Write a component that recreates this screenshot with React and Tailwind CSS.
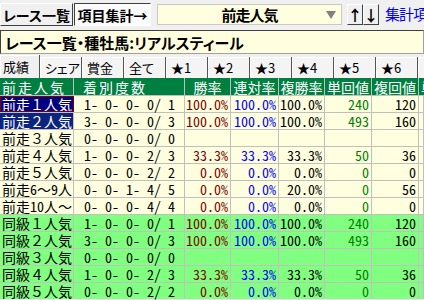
import React from 'react';

const cols = [74, 111, 46, 48, 46, 47, 47];

const rows = [
  { label: ['前走', '１', '人気'], count: '1- 0- 0- 0/ 1', win: '100.0%', ren: '100.0%', fuku: '100.0%', tan: '240', fk: '120', sel: 'focus', bg: 'yellow' },
  { label: ['前走', '２', '人気'], count: '3- 0- 0- 0/ 3', win: '100.0%', ren: '100.0%', fuku: '100.0%', tan: '493', fk: '160', sel: 'on', bg: 'yellow' },
  { label: ['前走', '３', '人気'], count: '0- 0- 0- 0/ 0', bg: 'yellow' },
  { label: ['前走', '４', '人気'], count: '1- 0- 0- 2/ 3', win: '33.3%', ren: '33.3%', fuku: '33.3%', tan: '50', fk: '36', bg: 'yellow' },
  { label: ['前走', '５', '人気'], count: '0- 0- 0- 2/ 2', win: '0.0%', ren: '0.0%', fuku: '0.0%', tan: '0', fk: '0', bg: 'yellow' },
  { label: ['前走', '6', '～', '9', '人'], count: '0- 0- 1- 4/ 5', win: '0.0%', ren: '0.0%', fuku: '20.0%', tan: '0', fk: '56', bg: 'yellow' },
  { label: ['前走', '10', '人～'], count: '0- 0- 0- 4/ 4', win: '0.0%', ren: '0.0%', fuku: '0.0%', tan: '0', fk: '0', bg: 'yellow' },
  { label: ['同級', '１', '人気'], count: '1- 0- 0- 0/ 1', win: '100.0%', ren: '100.0%', fuku: '100.0%', tan: '240', fk: '120', bg: 'green' },
  { label: ['同級', '２', '人気'], count: '3- 0- 0- 0/ 3', win: '100.0%', ren: '100.0%', fuku: '100.0%', tan: '493', fk: '160', bg: 'green' },
  { label: ['同級', '３', '人気'], count: '0- 0- 0- 0/ 0', bg: 'green' },
  { label: ['同級', '４', '人気'], count: '1- 0- 0- 2/ 3', win: '33.3%', ren: '33.3%', fuku: '33.3%', tan: '50', fk: '36', bg: 'green' },
  { label: ['同級', '５', '人気'], count: '0- 0- 0- 2/ 2', win: '0.0%', ren: '0.0%', fuku: '0.0%', tan: '0', fk: '0', bg: 'green' },
];

const tabs = ['シェア', '賞金', '全て', '★1', '★2', '★3', '★4', '★5', '★6', ''];

const headers = ['前走人気', '着別度数', '勝率', '連対率', '複勝率', '単回値', '複回値', '単'];

const raised = 'bg-[#f0f0f0] border border-t-white border-l-white border-r-[#404040] border-b-[#404040]';

// digits in the labels are half-width, like the fixed-pitch grid font
const isAscii = (s) => /^[0-9]+$/.test(s);

export default function App() {
  return (
    <div className="w-[424px] h-[300px] overflow-hidden bg-[#f0f0f0] text-black font-['Noto_Sans_CJK_JP',sans-serif]">
      {/* top bar */}
      <div className="h-[30px] flex items-start pt-[3px] whitespace-nowrap">
        <button className={`shrink-0 w-[73px] h-[23px] ${raised} text-[14px] font-bold [font-feature-settings:'palt'] leading-none flex items-center justify-center`}>
          レース一覧
        </button>
        <button className="shrink-0 ml-[1px] w-[77px] h-[23px] bg-[#fbfbfb] border border-t-[#404040] border-l-[#404040] border-r-white border-b-white text-[14px] font-bold [font-feature-settings:'palt'] leading-none flex items-center justify-center">
          項目集計→
        </button>
        <div className="shrink-0 ml-[6px] mt-[1px] w-[185px] h-[21px] bg-[#ffffe0] border border-[#c8c8c8] flex items-center relative">
          <span className="flex-1 text-center text-[15px] font-bold tracking-[-1px] leading-none">前走人気</span>
          <svg className="absolute right-[5px] top-[6px]" width="10" height="8" viewBox="0 0 10 8">
            <path d="M0 0 H10 L5 8 Z" fill="#808080" />
          </svg>
        </div>
        <div className="shrink-0 ml-[5px] mt-[1px] flex">
          <div className={`w-[16px] h-[21px] ${raised} flex items-center justify-center text-[15px] font-bold leading-none`}>↑</div>
          <div className={`w-[16px] h-[21px] ${raised} flex items-center justify-center text-[15px] font-bold leading-none`}>↓</div>
        </div>
        <span className="ml-[6px] mt-[3px] text-[15px] text-[#0000ff] leading-none tracking-[-1px]">集計項目</span>
      </div>

      {/* title */}
      <div className="h-[24px] bg-[#ffffe0] border border-[#a0a0a0] border-t-[#404040] border-l-[#404040] flex items-center pl-[4px] whitespace-nowrap">
        <span className="text-[15px] font-bold [font-feature-settings:'palt'] leading-none">レース一覧・種牡馬:リアルスティール</span>
      </div>

      {/* tabs */}
      <div className="h-[24px] flex items-end whitespace-nowrap overflow-hidden">
        <div className="shrink-0 w-[40px] h-[23px] flex items-center pl-[3px] text-[13px] leading-none shadow-[inset_-1px_0_0_#555555,inset_1px_1px_0_#ffffff]">
          成績
        </div>
        {tabs.map((t, i) => (
          <div
            key={i}
            className="w-[42px] h-[21px] shrink-0 bg-[#f4f4f4] shadow-[inset_-1px_0_0_#555555,inset_1px_1px_0_#ffffff] flex items-center pl-[5px] text-[13px] leading-none"
          >
            <span className="[font-feature-settings:'palt']">{t}</span>
          </div>
        ))}
      </div>

      {/* header */}
      <div className="h-[17px] flex bg-[#008040] text-white whitespace-nowrap overflow-hidden">
        {headers.map((h, i) => (
          <div
            key={i}
            style={i < cols.length ? { width: cols[i] } : undefined}
            className={`shrink-0 h-full flex items-center text-[14px] leading-none border-r border-[#c0c0c0] ${i === 0 ? 'pl-[2px] tracking-[2px]' : i === 1 ? 'pl-[9px] tracking-[2px]' : i === 7 ? 'pl-[2px] flex-1' : 'justify-center'}`}
          >
            {h}
          </div>
        ))}
      </div>

      {/* body */}
      {rows.map((r, idx) => {
        const bg = r.bg === 'green' ? 'bg-[#80ff80]' : 'bg-[#ffffe0]';
        const cell = 'shrink-0 h-full flex items-center border-r border-[#c0c0c0] leading-none';
        const num = `${cell} justify-end pr-[2px] [font-feature-settings:"hwid"] text-[14px]`;
        return (
          <div key={idx} className={`h-[17px] flex ${bg} border-t border-[#c0c0c0] whitespace-pre`}>
            <div
              style={{ width: cols[0] }}
              className={`${cell} pl-[2px] text-[14px] ${
                r.sel === 'focus'
                  ? 'bg-[#000080] text-white outline outline-1 -outline-offset-1 outline-[#800000]'
                  : r.sel === 'on'
                  ? 'bg-[#0a2480] text-white'
                  : ''
              }`}
            >
              {r.label.map((p, j) =>
                isAscii(p) ? (
                  <span key={j} className="[font-feature-settings:'hwid']">{p}</span>
                ) : (
                  <span key={j}>{p}</span>
                )
              )}
            </div>
            <div style={{ width: cols[1] }} className={`${cell} pl-[10px] text-[14px] [font-feature-settings:"hwid"]`}>
              {r.count}
            </div>
            <div style={{ width: cols[2] }} className={`${num} text-[#800000]`}>{r.win}</div>
            <div style={{ width: cols[3] }} className={`${num} text-[#0000ff]`}>{r.ren}</div>
            <div style={{ width: cols[4] }} className={`${num} text-black`}>{r.fuku}</div>
            <div style={{ width: cols[5] }} className={`${num} text-[#008000]`}>{r.tan}</div>
            <div style={{ width: cols[6] }} className={`${num} text-black`}>{r.fk}</div>
            <div className={`${cell} flex-1`} />
          </div>
        );
      })}
    </div>
  );
}
